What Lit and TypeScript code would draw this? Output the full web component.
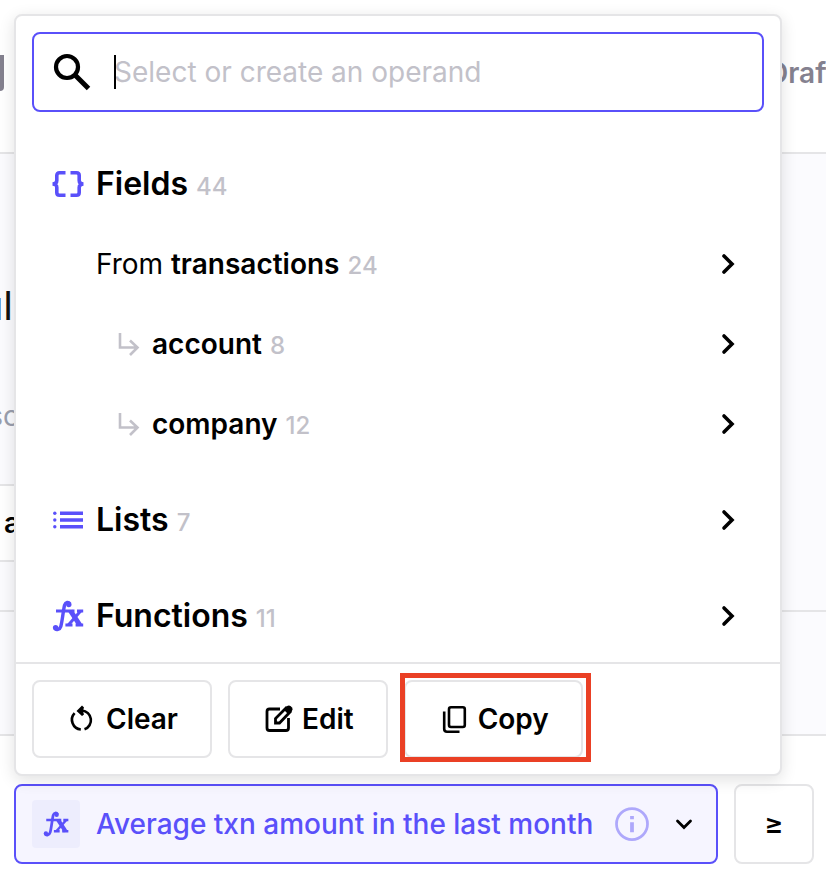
import { LitElement, html, css, svg, nothing } from "lit";
import { customElement } from "lit/decorators.js";
import { classMap } from "lit/directives/class-map.js";

const icons = {
  search: svg`<g fill="none" stroke="currentColor" stroke-width="4.2"><circle cx="15" cy="15" r="11"/><path d="M23 23L36.500 36.500" stroke-width="5"/></g>`,
  braces: svg`<path d="M13.500 4.800H7.500Q4.800 4.800 4.800 7.500V12.500Q4.800 16 0.500 16Q4.800 16 4.800 19.500V24.500Q4.800 27.200 7.500 27.200H13.500M18.500 4.800H24.500Q27.200 4.800 27.200 7.500V12.500Q27.200 16 31.500 16Q27.200 16 27.200 19.500V24.500Q27.200 27.200 24.500 27.200H18.500" fill="none" stroke="currentColor" stroke-width="3.600"/>`,
  list: svg`<g fill="currentColor"><path d="M8 7.500H31V11H8zM8 14.300H31V17.700H8zM8 21H31V24.500H8z"/><circle cx="2.800" cy="9.300" r="1.700"/><circle cx="2.800" cy="16" r="1.700"/><circle cx="2.800" cy="22.700" r="1.700"/></g>`,
  fx: svg`
    <g fill="none" stroke="currentColor">
      <path d="M18 4C16.500 1.600 13.600 2 12.600 5C11.400 9 10.400 21 8.800 26.400C7.800 29.800 4 30.400 2.800 28.400" stroke-width="3.400"/>
      <path d="M4 11H22.500M25 11H31.200M13.400 25H20.500M23.600 25H31.200" stroke-width="3"/>
      <path d="M18.600 11L27.800 25" stroke-width="5"/>
      <path d="M28.600 11L16.400 25" stroke-width="3"/>
    </g>
    <circle cx="16.800" cy="4.600" r="2.700" fill="currentColor"/>
    <circle cx="3.600" cy="27.600" r="2.700" fill="currentColor"/>`,
  branch: svg`<path d="M8 5V19.500H25M18 12.500L25.500 19.500L18 27" fill="none" stroke="currentColor" stroke-width="2.600"/>`,
  right: svg`<path d="M12 8L20 16L12 24" fill="none" stroke="currentColor" stroke-width="3.600" stroke-linecap="round"/>`,
  down: svg`<path d="M9.500 13L16 19.500L22.500 13" fill="none" stroke="currentColor" stroke-width="2.800" stroke-linecap="round"/>`,
  reset: svg`<g fill="none" stroke="currentColor" stroke-width="2.600"><path d="M14 7.500H16A9.700 9.700 0 0 1 18.500 26.300M14.800 26.500A9.700 9.700 0 0 1 8.600 10.200"/></g><path d="M10.500 8L16 2.500L18 4.500L16.800 8L18 11.500L16 13z" fill="currentColor"/>`,
  edit: svg`<path d="M18 6H7.500Q5 6 5 8.500V25Q5 27.500 7.500 27.500H24Q26.500 27.500 26.500 25V15" fill="none" stroke="currentColor" stroke-width="2.800"/><path d="M13.500 20V15.500L24 5L28 9L17.500 20z" fill="none" stroke="currentColor" stroke-width="2.800"/><path d="M21.500 6.500L24.800 3.200Q26.800 1.600 28.800 3.200L30 4.500Q31.400 6.400 29.800 8.200L26.500 11.500z" fill="currentColor"/>`,
  copy: svg`<g fill="none" stroke="currentColor" stroke-width="2.600"><rect x="11" y="4.300" width="15.800" height="19.700" rx="2"/><path d="M6.200 8.500V26Q6.200 28.700 9 28.700H21.500"/></g>`,
  info: svg`<circle cx="16" cy="16" r="12.400" fill="none" stroke="currentColor" stroke-width="2.200"/><path d="M14.500 14.500H17.500V22.500H14.500zM14.500 9.500H17.500V12.200H14.500z" fill="currentColor"/>`,
};
type IconName = keyof typeof icons;

const icon = (name: IconName, cls = "", box = "0 0 32 32") =>
  html`<svg class="icon ${cls}" viewBox=${box} aria-hidden="true">${icons[name]}</svg>`;

interface Row {
  label: string;
  count: number;
  kind: "group" | "source" | "relation";
  prefix?: string;
  icon?: IconName;
  open?: boolean;
}

const groups: Row[][] = [
  [
    { kind: "group", icon: "braces", label: "Fields", count: 44, open: true },
    { kind: "source", prefix: "From ", label: "transactions", count: 24 },
    { kind: "relation", icon: "branch", label: "account", count: 8 },
    { kind: "relation", icon: "branch", label: "company", count: 12 },
  ],
  [{ kind: "group", icon: "list", label: "Lists", count: 7 }],
  [{ kind: "group", icon: "fx", label: "Functions", count: 11 }],
];

const actions: { label: string; icon: IconName; marked?: boolean }[] = [
  { label: "Clear", icon: "reset" },
  { label: "Edit", icon: "edit" },
  { label: "Copy", icon: "copy", marked: true },
];

const base = css`
  * { box-sizing: border-box; }
  button, input { font: inherit; color: inherit; margin: 0; }
  .icon { width: 32px; height: 32px; flex: none; display: block; overflow: visible; }
`;

@customElement("operand-menu")
class OperandMenu extends LitElement {
  static styles = [base, css`
    :host {
      display: block;
      background: #fff;
      border: 2px solid #e5e5e7;
      border-radius: 8px;
      box-shadow: 0 4px 16px rgba(0, 0, 0, 0.12);
    }
    .search {
      position: relative;
      display: flex;
      align-items: center;
      gap: 22px;
      height: 80px;
      margin: 16px 16px 32px;
      padding: 0 18px;
      border: 2px solid #5a50fa;
      border-radius: 8px;
    }
    .search .icon { width: 40px; height: 40px; }
    .field { position: relative; flex: 1; min-width: 0; display: flex; align-items: center; }
    .field::before {
      content: "";
      position: absolute;
      left: 0;
      width: 2px;
      height: 34px;
      background: #000;
    }
    input { width: 100%; padding: 0; border: 0; outline: 0; background: none; line-height: 40px; }
    input::placeholder { color: #c2c1c9; opacity: 1; }
    .groups { display: flex; flex-direction: column; gap: 16px; padding-bottom: 6px; }
    .row {
      display: flex;
      align-items: center;
      gap: 12px;
      width: 100%;
      height: 80px;
      padding: 0 36px;
      border: 0;
      background: none;
      text-align: left;
    }
    .row.source { padding-left: 80px; }
    .row.relation { padding-left: 96px; gap: 8px; }
    .lead { color: #5a50fa; }
    .relation .lead { color: #c2c1c9; }
    .text { flex: 1; padding-top: 2px; white-space: pre; }
    .name { font-weight: 600; }
    .group .name { font-size: 32px; }
    .count { font-size: 24px; font-weight: 500; color: #c2c1c9; margin-left: 8px; }
    .actions { display: flex; gap: 16px; padding: 16px; border-top: 2px solid #e5e5e7; }
    .action {
      position: relative;
      display: flex;
      align-items: center;
      gap: 8px;
      height: 78px;
      padding: 0 32px;
      border: 2px solid #e5e5e7;
      border-radius: 8px;
      background: #fff;
      font-weight: 600;
    }
    .marked::after {
      content: "";
      position: absolute;
      inset: -9px -10px -6px -6px;
      border: 5px solid #ea4025;
    }
  `];

  row(r: Row) {
    return html`<button class=${classMap({ row: true, [r.kind]: true })}>
      ${r.icon ? icon(r.icon, "lead") : nothing}
      <span class="text">${r.prefix ?? ""}<span class="name">${r.label}</span><span class="count">${r.count}</span></span>
      ${r.open ? nothing : icon("right")}
    </button>`;
  }

  render() {
    return html`
      <label class="search">
        ${icon("search", "", "0 0 40 40")}
        <span class="field"><input type="text" aria-label="Operand" placeholder="Select or create an operand" /></span>
      </label>
      <div class="groups">${groups.map((g) => html`<div>${g.map((r) => this.row(r))}</div>`)}</div>
      <div class="actions">
        ${actions.map((a) => html`<button class=${classMap({ action: true, marked: !!a.marked })}>${icon(a.icon)}${a.label}</button>`)}
      </div>`;
  }
}

@customElement("app-root")
class AppRoot extends LitElement {
  static styles = [base, css`
    :host {
      display: block;
      overflow: hidden;
      background: #fff;
      color: #000;
      font: 400 28px/40px Inter, "Liberation Sans", sans-serif;
    }
    header {
      display: flex;
      align-items: center;
      justify-content: space-between;
      height: 154px;
      padding-bottom: 6px;
      border-bottom: 2px solid #e5e5e7;
      color: #84818f;
      font-weight: 600;
    }
    .tab { width: 4px; height: 36px; border-radius: 0 0 4px 0; background: #84818f; }
    .status { width: 58px; white-space: nowrap; }
    .panel { height: 458px; padding-top: 126px; background: #fbfbfe; border-bottom: 2px solid #e5e5e7; }
    .clip { display: flex; justify-content: flex-end; }
    .title { width: 13px; font-size: 40px; line-height: 52px; color: #111; }
    .note { width: 19px; margin-top: 64px; color: #9a9fae; }
    .card {
      width: 50%;
      height: 78px;
      margin-top: 48px;
      padding: 17px 4px;
      background: #fff;
      border: solid #e5e5e7;
      border-width: 2px 0;
      font-weight: 600;
    }
    .strip { height: 124px; background: #fbfbfe; border-bottom: 2px solid #e5e5e7; }
    .condition { position: relative; display: flex; gap: 16px; padding: 48px 12px 14px 14px; }
    .operand {
      flex: 1;
      min-width: 0;
      display: flex;
      align-items: center;
      gap: 16px;
      height: 80px;
      padding: 0 16px;
      border: 2px solid #5a50fa;
      border-radius: 8px;
      background: #f6f5ff;
      color: #5a50fa;
      text-align: left;
    }
    .badge { display: grid; place-items: center; width: 48px; height: 48px; border-radius: 4px; background: #ededfd; }
    .badge .icon { width: 26px; height: 26px; }
    .label { flex: 1; font-weight: 500; white-space: nowrap; }
    .info { width: 40px; height: 40px; color: #aea8fb; }
    .caret { color: #000; }
    .operator {
      width: 80px;
      height: 80px;
      border: 2px solid #e5e5e7;
      border-radius: 8px;
      background: #fff;
      font-weight: 600;
    }
    operand-menu { position: absolute; left: 14px; right: 44px; bottom: 102px; }
  `];

  render() {
    return html`
      <header><span class="tab"></span><span class="status">Draft</span></header>
      <section class="panel">
        <div class="clip title">ul</div>
        <div class="clip note">sc</div>
        <div class="card">a</div>
      </section>
      <div class="strip"></div>
      <div class="condition">
        <button class="operand">
          <span class="badge">${icon("fx")}</span>
          <span class="label">Average txn amount in the last month</span>
          ${icon("info", "info")}${icon("down", "caret")}
        </button>
        <button class="operator">≥</button>
        <operand-menu></operand-menu>
      </div>`;
  }
}
